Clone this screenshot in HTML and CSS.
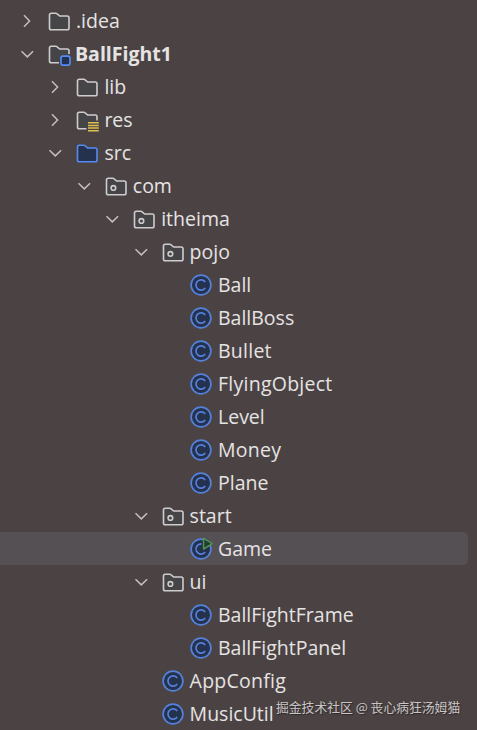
FILE: index.html
```
<!DOCTYPE html>
<html lang="zh">
<head>
    <meta charset="UTF-8">
    <title>BallFight1</title>
    <link rel="stylesheet" href="styles.css">
</head>
<body>
    <svg class="sprite">
        <symbol id="right" viewBox="0 0 24 24"><path class="arrow" d="M9 6.2 14.6 12l-5.6 5.8"/></symbol>
        <symbol id="down" viewBox="0 0 24 24"><path class="arrow" d="M6.5 9.3 12.3 14.9l5.8-5.6"/></symbol>
        <symbol id="folder" viewBox="0 0 24 24">
            <path class="folder" d="M2.5 6Q2.5 4.2 4.3 4.2H8.8Q9.5 4.2 10.1 4.8L12.7 7H20.2Q22 7 22 8.8V18.9Q22 20.7 20.2 20.7H4.3Q2.5 20.7 2.5 18.9Z"/>
        </symbol>
        <symbol id="module" viewBox="0 0 24 24">
            <path class="folder" d="M12 20.7H4.3Q2.5 20.7 2.5 18.9V6Q2.5 4.2 4.3 4.2H8.8Q9.5 4.2 10.1 4.8L12.7 7H20.2Q22 7 22 8.8V12"/>
            <rect class="badge" x="14" y="14.2" width="9" height="9" rx="2"/>
        </symbol>
        <symbol id="resources" viewBox="0 0 24 24">
            <path class="folder" d="M11.5 20.7H4.3Q2.5 20.7 2.5 18.9V6Q2.5 4.2 4.3 4.2H8.8Q9.5 4.2 10.1 4.8L12.7 7H20.2Q22 7 22 8.8V12.5"/>
            <path class="lines" d="M13 14.7h10.8M13 17.4h10.8M13 20.1h10.8M13 22.8h10.8"/>
        </symbol>
        <symbol id="package" viewBox="0 0 24 24">
            <path class="folder" d="M2.5 6Q2.5 4.2 4.3 4.2H8.8Q9.5 4.2 10.1 4.8L12.7 7H20.2Q22 7 22 8.8V18.9Q22 20.7 20.2 20.7H4.3Q2.5 20.7 2.5 18.9Z"/>
            <circle class="folder" cx="9.4" cy="13.9" r="2.3"/>
        </symbol>
        <symbol id="class" viewBox="0 0 24 24">
            <circle class="ring" cx="12" cy="12" r="9.9"/>
            <path class="letter" d="M16.2 9A5.1 5.1 0 1 0 16.2 15"/>
        </symbol>
        <symbol id="runnable" viewBox="0 0 24 24">
            <circle class="ring" cx="12" cy="12" r="9.9"/>
            <path class="letter" d="M12.5 6.9A5.1 5.1 0 1 0 16.2 15"/>
            <path class="run" d="M14.6 1.3V12L23.3 6.6Z"/>
        </symbol>
    </svg>

    <div class="tree">
        <div class="row"><svg class="toggle"><use href="#right"/></svg><svg class="icon"><use href="#folder"/></svg><span class="name">.idea</span></div>
        <div class="row root"><svg class="toggle"><use href="#down"/></svg><svg class="icon"><use href="#module"/></svg><span class="name">BallFight1</span></div>
        <div class="row level-1"><svg class="toggle"><use href="#right"/></svg><svg class="icon"><use href="#folder"/></svg><span class="name">lib</span></div>
        <div class="row level-1"><svg class="toggle"><use href="#right"/></svg><svg class="icon"><use href="#resources"/></svg><span class="name">res</span></div>
        <div class="row level-1"><svg class="toggle"><use href="#down"/></svg><svg class="icon source"><use href="#folder"/></svg><span class="name">src</span></div>
        <div class="row level-2"><svg class="toggle"><use href="#down"/></svg><svg class="icon"><use href="#package"/></svg><span class="name">com</span></div>
        <div class="row level-3"><svg class="toggle"><use href="#down"/></svg><svg class="icon"><use href="#package"/></svg><span class="name">itheima</span></div>
        <div class="row level-4"><svg class="toggle"><use href="#down"/></svg><svg class="icon"><use href="#package"/></svg><span class="name">pojo</span></div>
        <div class="row level-5"><span class="toggle"></span><svg class="icon"><use href="#class"/></svg><span class="name">Ball</span></div>
        <div class="row level-5"><span class="toggle"></span><svg class="icon"><use href="#class"/></svg><span class="name">BallBoss</span></div>
        <div class="row level-5"><span class="toggle"></span><svg class="icon"><use href="#class"/></svg><span class="name wide">Bullet</span></div>
        <div class="row level-5"><span class="toggle"></span><svg class="icon"><use href="#class"/></svg><span class="name wide">FlyingObject</span></div>
        <div class="row level-5"><span class="toggle"></span><svg class="icon"><use href="#class"/></svg><span class="name">Level</span></div>
        <div class="row level-5"><span class="toggle"></span><svg class="icon"><use href="#class"/></svg><span class="name wide">Money</span></div>
        <div class="row level-5"><span class="toggle"></span><svg class="icon"><use href="#class"/></svg><span class="name">Plane</span></div>
        <div class="row level-4"><svg class="toggle"><use href="#down"/></svg><svg class="icon"><use href="#package"/></svg><span class="name">start</span></div>
        <div class="row level-5 selected"><span class="toggle"></span><svg class="icon"><use href="#runnable"/></svg><span class="name">Game</span></div>
        <div class="row level-4"><svg class="toggle"><use href="#down"/></svg><svg class="icon"><use href="#package"/></svg><span class="name">ui</span></div>
        <div class="row level-5"><span class="toggle"></span><svg class="icon"><use href="#class"/></svg><span class="name">BallFightFrame</span></div>
        <div class="row level-5"><span class="toggle"></span><svg class="icon"><use href="#class"/></svg><span class="name">BallFightPanel</span></div>
        <div class="row level-4"><span class="toggle"></span><svg class="icon"><use href="#class"/></svg><span class="name wide">AppConfig</span></div>
        <div class="row level-4"><span class="toggle"></span><svg class="icon"><use href="#class"/></svg><span class="name">MusicUtil</span></div>
    </div>
    <div class="watermark">掘金技术社区 @ 丧心病狂汤姆猫</div>
</body>
</html>
```
FILE: styles.css
```
* {
    box-sizing: border-box;
}

body {
    margin: 0;
    height: 730px;
    background: #4b4343;
    color: #e6e3e3;
    font-family: "Open Sans", "Noto Sans", sans-serif;
    font-size: 19.5px;
    position: relative;
    overflow: hidden;
}

.sprite {
    display: none;
}

.tree {
    padding: 4px 9px 0 0;
}

.row {
    display: flex;
    align-items: center;
    height: 33px;
    padding-left: 15px;
    border-radius: 0 5px 5px 0;
}

.level-1 { padding-left: 43.4px; }
.level-2 { padding-left: 71.8px; }
.level-3 { padding-left: 100.2px; }
.level-4 { padding-left: 128.6px; }
.level-5 { padding-left: 157px; }

.selected {
    background: #555053;
}

.toggle {
    width: 24px;
    height: 24px;
    margin-right: 8px;
    flex-shrink: 0;
}

.icon {
    width: 24px;
    height: 24px;
    margin-right: 5px;
    flex-shrink: 0;
    fill: #454447;
    stroke: #cfcccd;
}

.source {
    fill: #25324d;
    stroke: #548af7;
}

.name {
    line-height: 33px;
    white-space: nowrap;
}

.wide {
    letter-spacing: 0.25px;
}

.root .name {
    font-weight: bold;
    margin-left: -1px;
}

/* icons, the folder takes its colours from .icon */
.arrow {
    fill: none;
    stroke: #c4bfbf;
    stroke-width: 1.5;
}

.folder {
    stroke-width: 1.6;
}

.badge {
    fill: #25324d;
    stroke: #548af7;
    stroke-width: 1.7;
}

.lines {
    stroke: #e0c04c;
    stroke-width: 1.5;
}

.ring {
    fill: #25324d;
    stroke: #5580dc;
    stroke-width: 1.7;
}

.letter {
    fill: none;
    stroke: #5580dc;
    stroke-width: 1.7;
}

.run {
    fill: #253b2b;
    stroke: #4c9353;
    stroke-width: 1.5;
    stroke-linejoin: round;
}

.watermark {
    position: absolute;
    left: 276px;
    top: 697px;
    font-family: "Noto Sans CJK SC", sans-serif;
    font-size: 12.8px;
    line-height: 20px;
    color: #c9c5c5;
    text-shadow: 1px 1px 1px #2d2828;
    white-space: nowrap;
}
```
